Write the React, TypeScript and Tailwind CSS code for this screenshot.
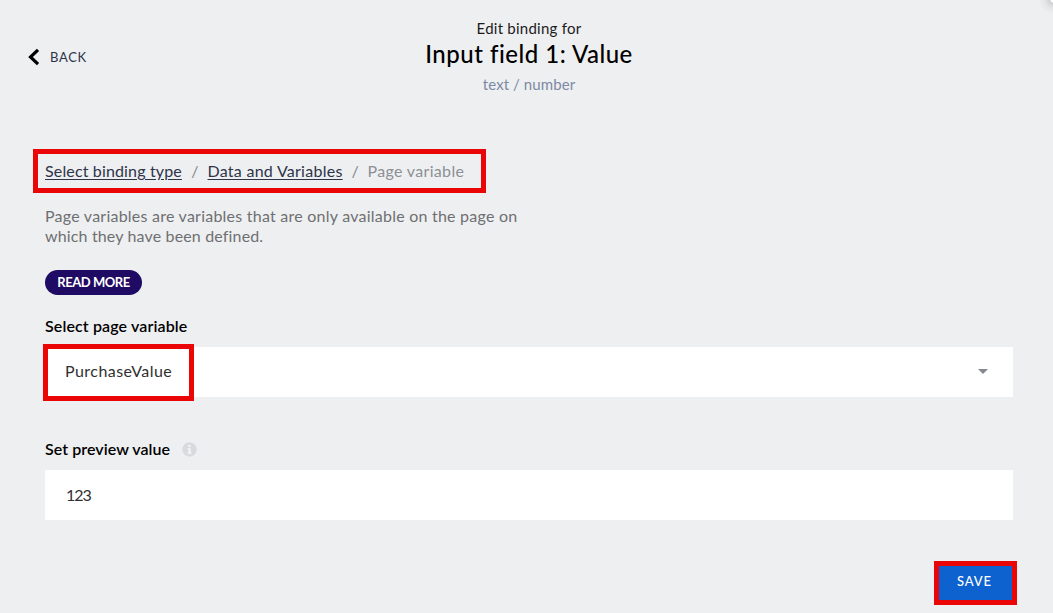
import React from "react";

function Header() {
  return (
    <header className="relative flex h-[149px] shrink-0 justify-center">
      <button className="absolute left-[28px] top-[47px] flex h-5 items-center text-[13px] text-[#2d3449]">
        <svg width="12" height="18" viewBox="0 0 12 18" fill="none" className="mr-[10px]">
          <path d="M10 1.8 2.5 9 10 16.2" stroke="#000" strokeWidth="3.2" />
        </svg>
        <span className="pt-[2px] tracking-[0.7px]">BACK</span>
      </button>
      <div className="flex flex-col items-center pl-[5px] pt-[18px] whitespace-nowrap">
        <p className="h-5 text-[15px] leading-5 tracking-[0.25px] text-[#1c1c1c]">Edit binding for</p>
        <h1 className="h-8 text-[24px] font-medium leading-8 tracking-[0.5px] text-black">Input field 1: Value</h1>
        <p className="mt-1 h-5 text-[15px] leading-5 tracking-[0.08px] text-[#7d8aa5]">text / number</p>
      </div>
      <div className="absolute right-0 top-0 h-4 w-5 bg-[radial-gradient(circle_at_100%_0%,#fff_0,#fff_2px,#d0d1d3_3px,#e3e4e6_8px,#eeeff1_14px)]" />
    </header>
  );
}

function Breadcrumbs() {
  return (
    <nav className="ml-[33px] flex h-11 w-[453px] items-center whitespace-nowrap border-[5px] border-[#ea0606] pl-[7px] text-[16px] leading-5 text-[#2d3449]">
      <a className="w-[137px] tracking-[0.15px] underline underline-offset-2">Select binding type</a>
      <span className="w-[25.5px] text-center text-[#85878d]">/</span>
      <a className="w-[135px] tracking-[0.27px] underline underline-offset-2">Data and Variables</a>
      <span className="w-[25px] text-center text-[#85878d]">/</span>
      <span className="tracking-[0.33px] text-[#8d8f96]">Page variable</span>
    </nav>
  );
}

export default function App() {
  return (
    <main className="flex h-[613px] w-[1053px] flex-col overflow-hidden bg-[#eeeff1] font-['Lato',sans-serif]">
      <Header />
      <Breadcrumbs />
      <section className="ml-[45px] flex w-[968px] flex-col items-start">
        <p className="mt-[13px] whitespace-nowrap text-[16px] leading-5 text-[#6e6f72]">
          <span className="tracking-[0.235px]">Page variables are variables that are only available on the page on</span>
          <br />
          <span className="tracking-[0.15px]">which they have been defined.</span>
        </p>
        <button className="mt-[24px] h-[25px] w-[97px] rounded-full bg-[#1f0a64] text-[13px] font-bold leading-[25px] tracking-[-0.45px] text-white">READ MORE</button>
        <label className="mt-[21px] h-5 text-[16px] font-semibold leading-5 tracking-[0.12px] text-black">Select page variable</label>
        <div className="relative mt-[11px] flex h-[50px] w-full items-center justify-between bg-white pl-[20px] pr-[25px]">
          <span className="pb-[2px] text-[16px] tracking-[0.45px] text-[#303030]">PurchaseValue</span>
          <svg className="mb-[2px]" width="10" height="5" viewBox="0 0 10 5"><path d="M0 0H10L5 5Z" fill="#85888f" /></svg>
          <div className="absolute -left-[2px] -top-[3px] h-[57px] w-[151px] border-[5px] border-[#ea0606]" />
        </div>
        <div className="mt-[42px] flex h-5 items-center">
          <label className="w-[137px] text-[16px] font-semibold leading-5 tracking-[0.05px] text-black">Set preview value</label>
          <svg width="15" height="15" viewBox="0 0 15 15">
            <circle cx="7.5" cy="7.5" r="7.2" fill="#d9dadd" />
            <path d="M6.3 3h2.3v2H6.3zM5.5 6.2h3.1v4.4h1v1.2H5.5v-1.2h1V7.4h-1z" fill="#f4f5f6" />
          </svg>
        </div>
        <div className="mt-[11px] flex h-[50px] w-full items-center bg-white pl-[21px] text-[16px] tracking-[-1px] text-[#303030]">123</div>
      </section>
      <button className="ml-[934px] mt-[41px] h-11 w-[83px] border-[5px] border-[#ea0606] bg-[#0d62d0] pb-[2px] pr-[2px] text-[13px] font-medium tracking-[0.9px] text-white">SAVE</button>
    </main>
  );
}
